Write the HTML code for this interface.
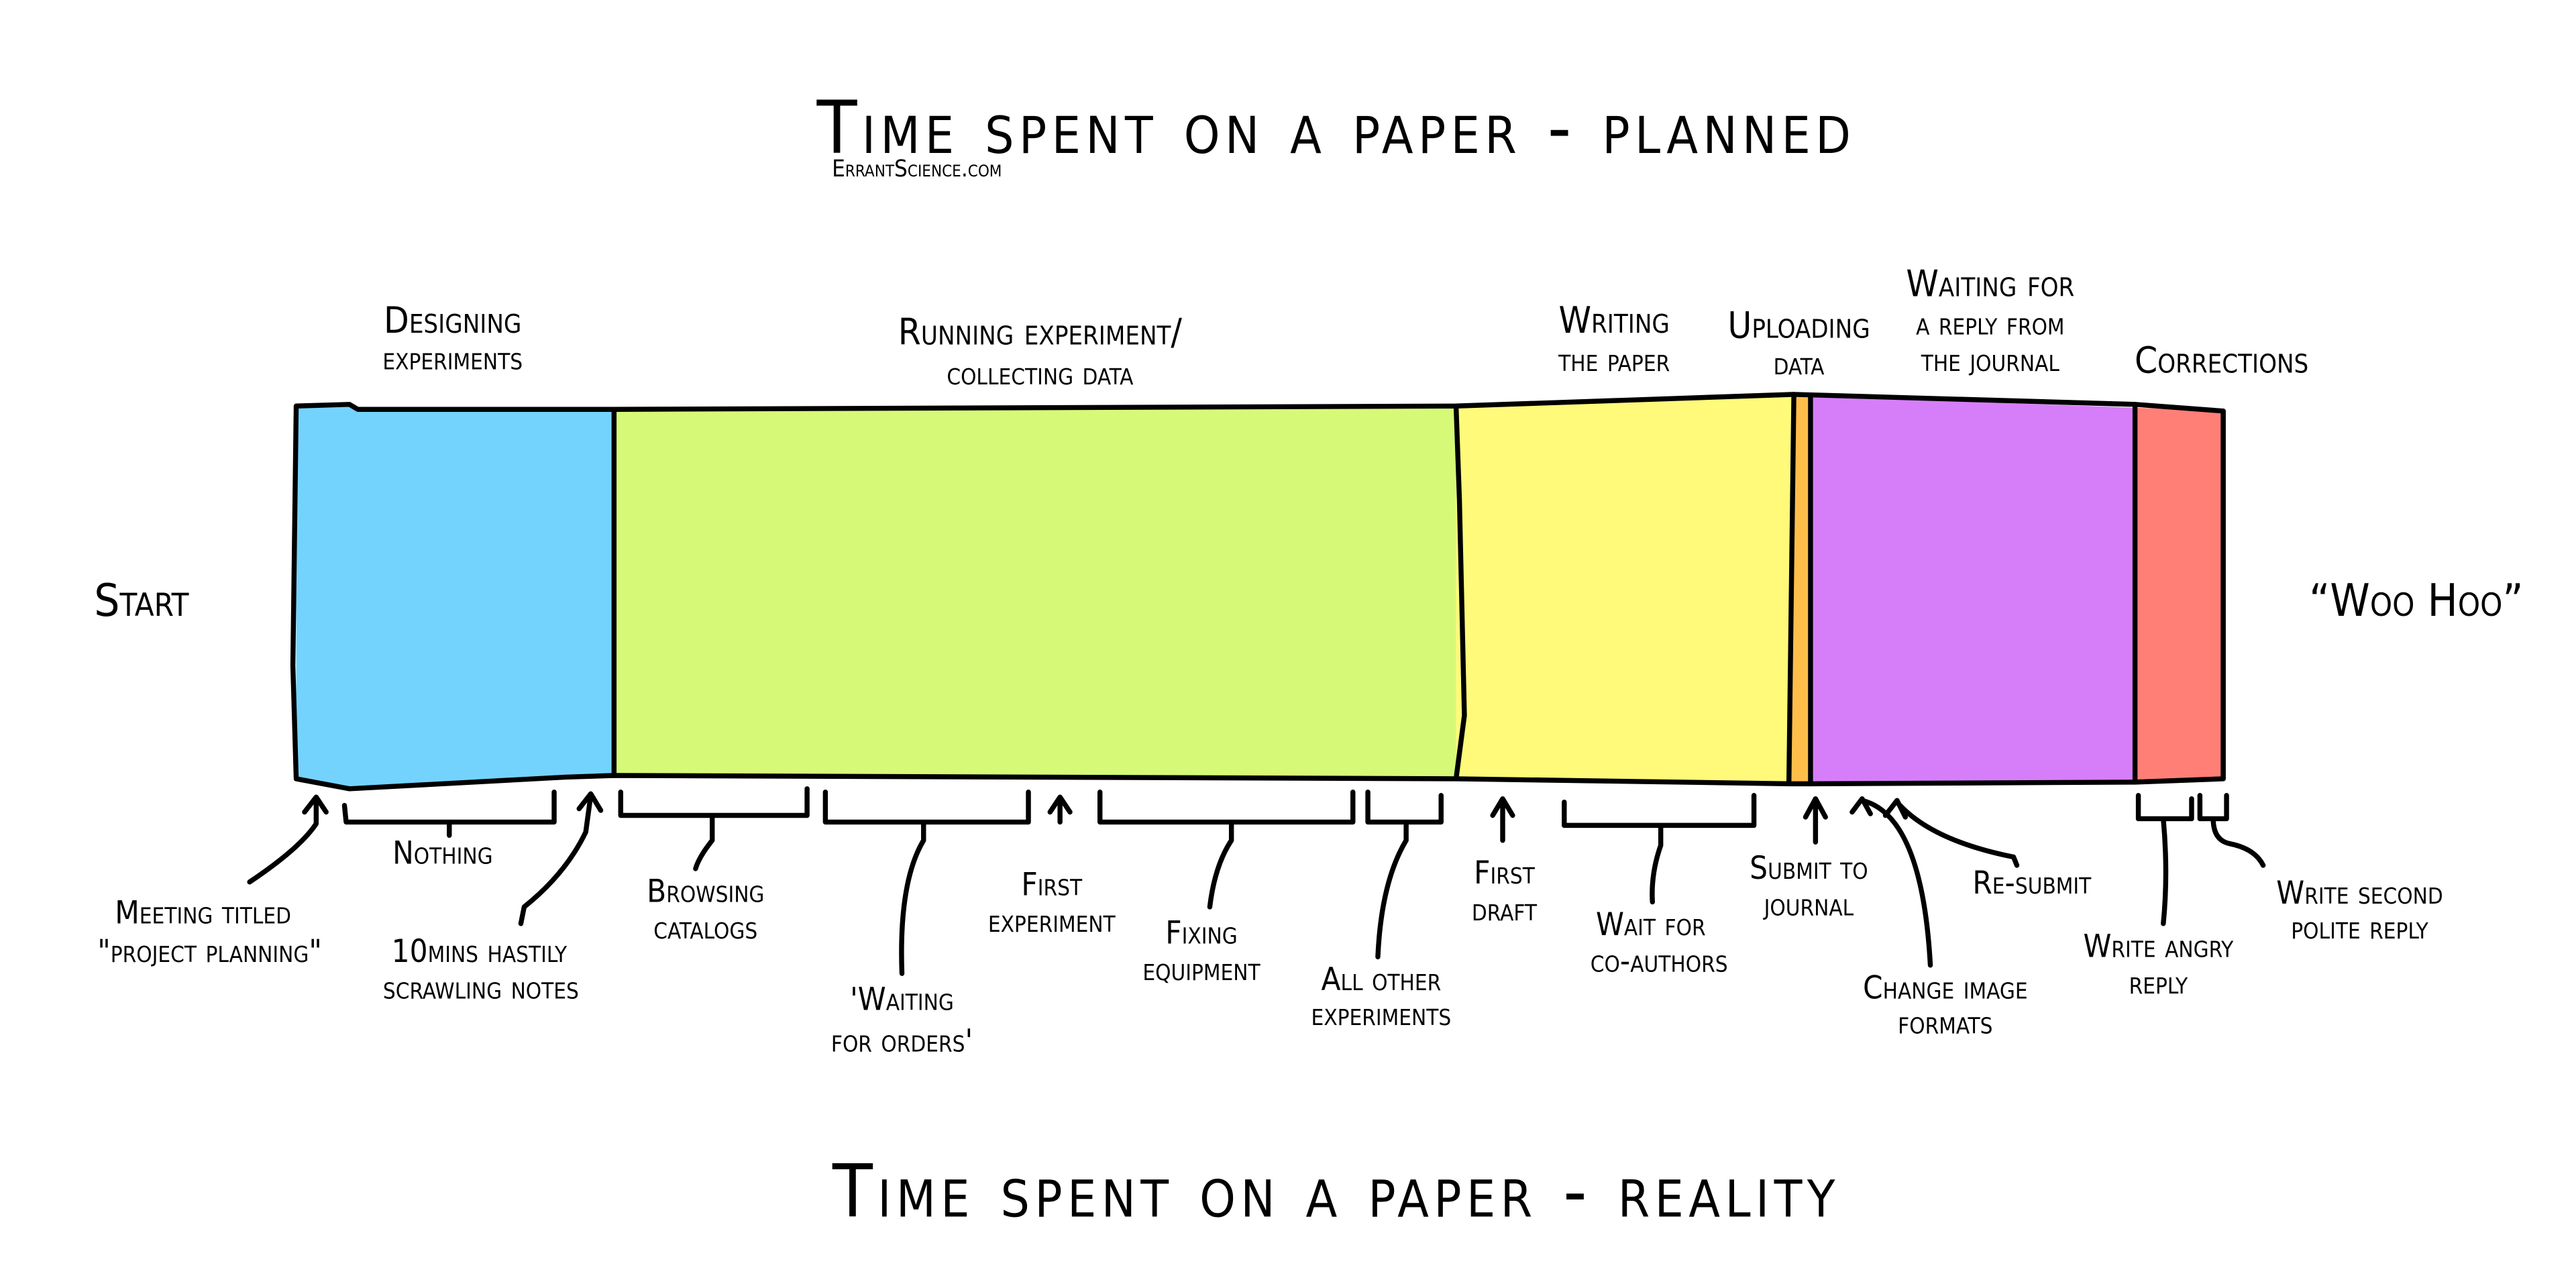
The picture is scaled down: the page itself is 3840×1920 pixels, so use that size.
<!DOCTYPE html>
<html><head><meta charset="utf-8">
<style>
html,body{margin:0;padding:0;background:#fff;}
svg{display:block;}
text{font-family:"Liberation Sans Narrow","DejaVu Sans Condensed","Liberation Sans",sans-serif;font-variant:small-caps;fill:#000;text-anchor:middle;}
.l{font-size:19px;font-weight:500;}
.h{font-size:22px;}
.t{font-size:44px;letter-spacing:3px;}
path.s{fill:none;stroke:#000;stroke-width:3;stroke-linecap:round;stroke-linejoin:round;}
</style></head><body>
<svg width="3840" height="1920" viewBox="0 0 1548 774" preserveAspectRatio="none" xmlns="http://www.w3.org/2000/svg">
<rect width="1548" height="774" fill="#fff"/>
<text class="t" x="803" y="92">Time spent on a paper - planned</text>
<text x="551" y="106" style="font-size:14px;font-weight:500">ErrantScience.com</text>

<path d="M178 244 L210 243 L215 246 L369 246 L369 466 L340 467 L210 474 L178 468 Z" fill="#74D3FD"/>
<path d="M369 246 L875 244 L875 468 L369 466 Z" fill="#D6FA78"/>
<path d="M875 244 L1078 238 L1078 471 L875 468 Z" fill="#FFFA7A"/>
<path d="M1078 238 L1088 238 L1088 471 L1076 471 Z" fill="#FFBE4A"/>
<path d="M1088 238 L1283 245 L1283 470 L1088 471 Z" fill="#D67EFA"/>
<path d="M1283 245 L1336 247 L1336 468 L1283 470 Z" fill="#FF7F77"/>
<path class="s" d="M178 244 L210 243 L215 246 L369 246 L875 244 L1078 237 L1283 243 L1336 247 L1336 468 L1283 470 L1088 471 L1076 471 L875 468 L369 466 L340 467 L210 474 L178 468 L176 400 L178 244"/>
<path class="s" d="M369 246 L369 466 M875 244 L877 300 L880 430 L875 468 M1078 237 L1075 471 M1088 238 L1088 471 M1283 243 L1283 470 M1336 247 L1336 468"/>

<text class="h" x="272" y="200">Designing</text><text class="l" x="272" y="222">experiments</text>
<text class="h" x="625" y="207">Running experiment/</text><text class="l" x="625" y="231">collecting data</text>
<text class="h" x="970" y="200">Writing</text><text class="l" x="970" y="223">the paper</text>
<text class="h" x="1081" y="203">Uploading</text><text class="l" x="1081" y="225">data</text>
<text class="h" x="1196" y="178">Waiting for</text><text class="l" x="1196" y="201">a reply from</text><text class="l" x="1196" y="223">the journal</text>
<text class="h" x="1335" y="224">Corrections</text>
<text style="font-size:27px" x="85" y="370">Start</text>
<text style="font-size:27px" x="1452" y="370">“Woo Hoo”</text>

<path class="s" d="M207 484 L208 494 L333 494 L333 476 M270 494 L270 502"/>
<path class="s" d="M190 480 L190 495 Q180 510 150 530 M183 488 L190 479 L196 488"/>
<path class="s" d="M355 478 L352 500 Q340 525 315 545 L313 555 M348 486 L355 477 L361 487"/>
<path class="s" d="M373 476 L373 490 L485 490 L485 474 M428 490 L428 505 Q420 515 418 522"/>
<path class="s" d="M496 476 L496 494 L618 494 L618 476 M555 494 L555 505 Q540 530 542 585"/>
<path class="s" d="M637 494 L637 480 M631 488 L637 479 L643 488"/>
<path class="s" d="M661 476 L661 494 L813 494 L813 476 M740 494 L740 505 Q730 520 727 545"/>
<path class="s" d="M822 476 L822 494 L866 494 L866 478 M845 494 L845 505 Q830 530 828 575"/>
<path class="s" d="M903 505 L903 481 M897 490 L903 480 L909 490"/>
<path class="s" d="M940 482 L940 496 L1054 496 L1054 478 M998 496 L998 508 Q992 525 993 542"/>
<path class="s" d="M1091 506 L1091 482 M1085 491 L1091 480 L1097 491"/>
<path class="s" d="M1113 488 L1119 480 L1124 489 M1119 481 Q1155 490 1160 580"/>
<path class="s" d="M1133 490 L1140 481 L1145 491 M1140 482 Q1160 505 1210 515 L1212 520"/>
<path class="s" d="M1285 478 L1285 492 L1317 492 L1317 480 M1300 492 Q1303 525 1300 555"/>
<path class="s" d="M1322 478 L1322 492 L1338 492 L1338 478 M1330 492 Q1330 505 1340 507 Q1355 510 1360 520"/>

<text class="l" x="266" y="519">Nothing</text>
<text class="l" x="122" y="555">Meeting titled</text><text class="l" x="126" y="578">"project planning"</text>
<text class="l" x="288" y="578">10mins hastily</text><text class="l" x="289" y="600">scrawling notes</text>
<text class="l" x="424" y="542">Browsing</text><text class="l" x="424" y="564">catalogs</text>
<text class="l" x="542" y="607">'Waiting</text><text class="l" x="542" y="632">for orders'</text>
<text class="l" x="632" y="538">First</text><text class="l" x="632" y="560">experiment</text>
<text class="l" x="722" y="567">Fixing</text><text class="l" x="722" y="589">equipment</text>
<text class="l" x="830" y="595">All other</text><text class="l" x="830" y="616">experiments</text>
<text class="l" x="904" y="531">First</text><text class="l" x="904" y="553">draft</text>
<text class="l" x="992" y="562">Wait for</text><text class="l" x="997" y="584">co-authors</text>
<text class="l" x="1087" y="528">Submit to</text><text class="l" x="1087" y="550">journal</text>
<text class="l" x="1221" y="537">Re-submit</text>
<text class="l" x="1169" y="600">Change image</text><text class="l" x="1169" y="621">formats</text>
<text class="l" x="1297" y="575">Write angry</text><text class="l" x="1297" y="597">reply</text>
<text class="l" x="1418" y="543">Write second</text><text class="l" x="1418" y="564">polite reply</text>

<text class="t" x="803" y="731">Time spent on a paper - reality</text>
</svg>
</body></html>
